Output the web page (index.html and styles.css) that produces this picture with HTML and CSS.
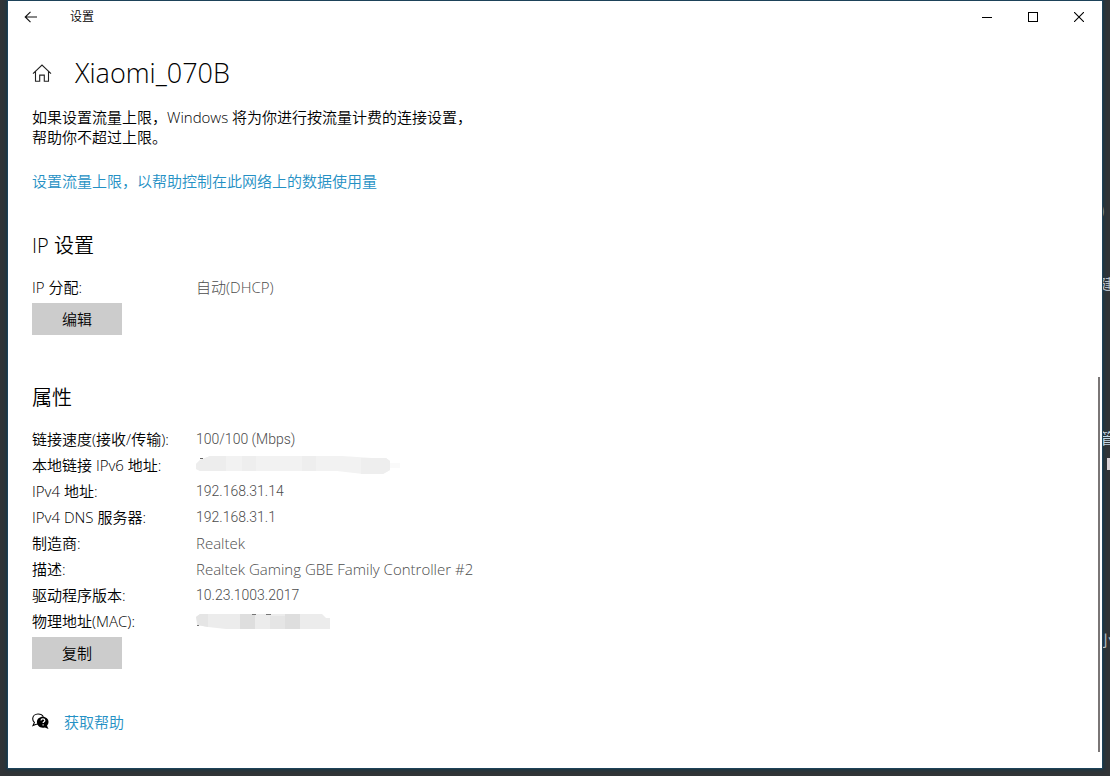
FILE: index.html
```html
<!DOCTYPE html>
<html lang="zh-CN">
<head>
<meta charset="utf-8">
<meta name="viewport" content="width=device-width, initial-scale=1">
<title>设置</title>
<link rel="stylesheet" href="styles.css">
</head>
<body>
<div class="desktop">
  <div class="backdrop" aria-hidden="true">
    <span class="scrap scrap-paren">)</span>
    <span class="scrap scrap-build">建</span>
    <span class="scrap scrap-manage">管</span>
    <span class="scrap scrap-block"></span>
    <span class="scrap scrap-small">小</span>
  </div>
  <div class="window">
    <header class="titlebar">
      <button class="caption-btn back" type="button" aria-label="返回">
        <svg width="14" height="12" viewBox="0 0 14 12"><path d="M6.5 .8 1.2 6l5.3 5.2M1.2 6H13" fill="none" stroke="#111" stroke-width="1.1"/></svg>
      </button>
      <span class="app-name">设置</span>
      <div class="caption">
        <button class="caption-btn" type="button" aria-label="最小化">
          <svg width="10" height="10" viewBox="0 0 10 10"><path d="M0 5.5h10" stroke="#000"/></svg>
        </button>
        <button class="caption-btn" type="button" aria-label="最大化">
          <svg width="10" height="10" viewBox="0 0 10 10" shape-rendering="crispEdges"><path d="M.5 .5h9v9h-9z" fill="none" stroke="#000"/></svg>
        </button>
        <button class="caption-btn" type="button" aria-label="关闭">
          <svg width="10" height="10" viewBox="0 0 10 10"><path d="M0 0l10 10M10 0 0 10" stroke="#000" stroke-width="1.1"/></svg>
        </button>
      </div>
    </header>
    <main class="content">
      <div class="page-head">
        <svg class="home" width="20" height="18" viewBox="0 0 20 18"><path d="M1 9.600 10 1l9 8.600M3.500 7.600v9.700h4.200v-6.200h4.600v6.200h4.200V7.600" fill="none" stroke="#222" stroke-width="1.1"/></svg>
        <h1 class="page-title">Xiaomi_070B</h1>
      </div>
      <p class="intro">如果设置流量上限，Windows 将为你进行按流量计费的连接设置，帮助你不超过上限。</p>
      <a class="link limit-link" href="#limit">设置流量上限，以帮助控制在此网络上的数据使用量</a>

      <section class="section section-ip">
        <h2 class="section-title">IP 设置</h2>
        <dl class="props">
          <dt>IP 分配:</dt><dd>自动(DHCP)</dd>
        </dl>
        <button class="btn" type="button">编辑</button>
      </section>

      <section class="section">
        <h2 class="section-title">属性</h2>
        <dl class="props">
          <dt>链接速度(接收/传输):</dt><dd class="num">100/100 (Mbps)</dd>
          <dt>本地链接 IPv6 地址:</dt>
          <dd class="masked">
            <svg width="204" height="20" viewBox="0 0 204 20" role="img" aria-label="已隐藏">
              <path d="M0 9 4 5l10-4h132l30 2h14l4 3v9l-7 4h-20l-26-3H4L0 14z" fill="#f2f2f2"/>
              <path d="M0 9 4 5l10-4h16v15H4L0 14z" fill="#ededed"/>
              <path d="M46 1h14v15H46zM106 1h14v15h-14zM165 3h25l4 3v9l-7 4h-22z" fill="#eeeeee"/>
              <path d="M194 8h12v5h-12z" fill="#fafafa"/>
              <path d="M4 3.500h3" stroke="#666"/>
            </svg>
          </dd>
          <dt>IPv4 地址:</dt><dd class="num">192.168.31.14</dd>
          <dt>IPv4 DNS 服务器:</dt><dd class="num">192.168.31.1</dd>
          <dt>制造商:</dt><dd>Realtek</dd>
          <dt>描述:</dt><dd>Realtek Gaming GBE Family Controller #2</dd>
          <dt>驱动程序版本:</dt><dd class="num">10.23.1003.2017</dd>
          <dt>物理地址(MAC):</dt>
          <dd class="masked">
            <svg width="204" height="20" viewBox="0 0 204 20" role="img" aria-label="已隐藏">
              <path d="M0 6l4-3h122l4 4h4v11H30L12 16l-11-2z" fill="#ececec"/>
              <path d="M0 6l4-3h8v13L2 14z" fill="#e5e5e5"/>
              <path d="M44 3h15v15H44zM89 3h15v15H89z" fill="#dedede"/>
              <path d="M74 5h15v13H74z" fill="#e5e5e5"/>
              <path d="M56 3.500h4M70 3.500h5M1 14.500h2" stroke="#777"/>
            </svg>
          </dd>
        </dl>
        <button class="btn" type="button">复制</button>
      </section>

      <div class="help">
        <svg width="18" height="18" viewBox="0 0 18 18">
          <path d="M6 1C3 1 .7 3.100.7 5.800c0 1.500.6 2.700 1.700 3.600L1 12.500l3.300-1.300h1.500M11.300 3.800C10.500 2 8.500 1 6 1" fill="none" stroke="#000" stroke-width="1.1"/>
          <path d="M10.800 3.700c3.200 0 5.700 2.300 5.700 5.100 0 1.700-.6 2.900-1.500 3.900l1.500 3.400-3.600-1.700c-4.600 1.300-8-1.700-8-5.300 0-3.100 2.600-5.400 5.900-5.400z" fill="#000"/>
          <path d="M9 7.600c0-1.100.8-1.800 1.900-1.800s1.900.6 1.900 1.600c0 1.300-1.700 1.400-1.700 2.600M11.100 11.300v1.300" fill="none" stroke="#fff" stroke-width="1.200"/>
        </svg>
        <a class="link" href="#help">获取帮助</a>
      </div>
    </main>
    <div class="scroll-thumb"></div>
  </div>
</div>
</body>
</html>
```
FILE: styles.css
```css
* {
  box-sizing: border-box;
}

body {
  margin: 0;
  font-family: "Open Sans", "Noto Sans CJK SC", sans-serif;
  font-size: 15px;
  font-weight: 350;
  line-height: 20px;
  color: #000;
}

.desktop {
  position: relative;
  display: flex;
  min-height: 100vh;
  padding: 0 7px 7px;
  background: #303437;
  overflow: hidden;
}

.window {
  position: relative;
  flex: 1;
  min-width: 0;
  background: #fff;
  border: 1px solid #1d4259;
  box-shadow: 0 0 3px 1px #193746;
}

/* Text of the window behind, showing past the right edge */
.backdrop {
  position: absolute;
  inset: 0;
  z-index: 1;
  clip-path: inset(0 0 0 calc(100% - 7px));
  pointer-events: none;
}

.scrap {
  position: absolute;
  left: calc(100% - 10px);
  font-size: 15px;
  font-weight: 400;
  color: #b4bec6;
}

.scrap-paren {
  top: 199px;
  color: #7890a0;
}

.scrap-build { top: 274px; }
.scrap-manage { top: 428px; color: #c3d8e6; }

.scrap-block {
  left: calc(100% - 3px);
  top: 458px;
  width: 3px;
  height: 12px;
  background: #d8d2d6;
}

.scrap-small {
  left: calc(100% - 12px);
  top: 630px;
}

.titlebar {
  display: flex;
  align-items: center;
  height: 32px;
  font-size: 12px;
}

.caption {
  display: flex;
  margin-left: auto;
}

.caption-btn {
  display: flex;
  align-items: center;
  justify-content: center;
  width: 46px;
  height: 32px;
  padding: 0;
  border: 0;
  background: none;
}

.app-name {
  margin-left: 16px;
}

.content {
  padding: 23px 24px 32px;
}

.page-head {
  display: flex;
  align-items: center;
  gap: 23px;
  height: 34px;
}

.page-title {
  margin: 0;
  font-size: 27px;
  font-weight: 300;
  line-height: 34px;
}

.intro {
  max-width: 448px;
  margin: 17px 0 0;
}

.link {
  color: #2490c4;
  text-decoration: none;
}

.limit-link {
  display: block;
  margin-top: 24px;
}

.section {
  margin-top: 49px;
}

.section-ip {
  margin-top: 41px;
}

.section-title {
  margin: 0 0 14px;
  font-size: 20px;
  font-weight: 350;
  line-height: 28px;
}

.props {
  display: grid;
  grid-template-columns: 164px 1fr;
  grid-auto-rows: 26px;
  line-height: 26px;
  margin: 0;
}

.props dt,
.props dd {
  margin: 0;
  white-space: nowrap;
}

.props dd {
  color: #4c4c4c;
  font-weight: 300;
}

.props .num {
  font-family: Roboto, "Open Sans", sans-serif;
  font-size: 14px;
}

.masked {
  display: flex;
  align-items: center;
}

.btn {
  display: block;
  width: 90px;
  height: 32px;
  margin-top: 3px;
  padding: 0;
  border: 0;
  background: #ccc;
  color: #000;
  font: inherit;
}

.help {
  display: flex;
  align-items: center;
  gap: 14px;
  margin-top: 43px;
}

.scroll-thumb {
  position: absolute;
  top: 49%;
  right: 2px;
  bottom: 16px;
  width: 2px;
  background: #7a7676;
}
```
